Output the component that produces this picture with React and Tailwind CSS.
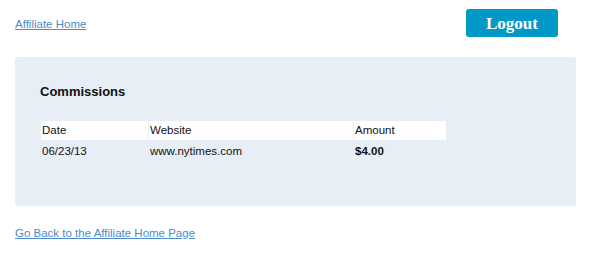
export default function App() {
    return (
        <div className="w-[600px] h-[269px] bg-white font-['Liberation_Sans',Arial,sans-serif] text-[11.5px] text-[#111]">
            {/* Header */}
            <div className="h-[46px] flex items-center justify-between pl-[15px] pr-[42px]">
                <a href="#" className="text-[11.5px] text-[#4a8ccc] underline mt-[4px]">
                    Affiliate Home
                </a>
                <button className="w-[92px] h-[28px] rounded-[3px] bg-[#0099c7] text-white font-['Liberation_Serif',serif] font-bold text-[17px] leading-none">
                    Logout
                </button>
            </div>

            {/* Panel */}
            <div className="mt-[11px] ml-[15px] w-[561px] h-[149px] rounded-[3px] bg-[#e7eef6] pl-[25px] pt-[27px]">
                <h2 className="text-[13px] font-bold leading-[16px]">Commissions</h2>
                <table className="mt-[21px] border-separate border-spacing-x-[1px] border-spacing-y-0">
                    <thead>
                        <tr className="h-[19px]">
                            <td className="w-[107px] bg-white pl-[1px] align-middle">Date</td>
                            <td className="w-[204px] bg-white pl-[1px] align-middle">Website</td>
                            <td className="w-[92px] bg-white pl-[1px] align-middle">Amount</td>
                        </tr>
                    </thead>
                    <tbody>
                        <tr className="h-[24px]">
                            <td className="pl-[1px] align-middle">06/23/13</td>
                            <td className="pl-[1px] align-middle">www.nytimes.com</td>
                            <td className="pl-[1px] align-middle font-bold">$4.00</td>
                        </tr>
                    </tbody>
                </table>
            </div>

            {/* Footer link */}
            <div className="pl-[15px] mt-[19px]">
                <a href="#" className="text-[11.5px] text-[#4a8ccc] underline">
                    Go Back to the Affiliate Home Page
                </a>
            </div>
        </div>
    );
}
